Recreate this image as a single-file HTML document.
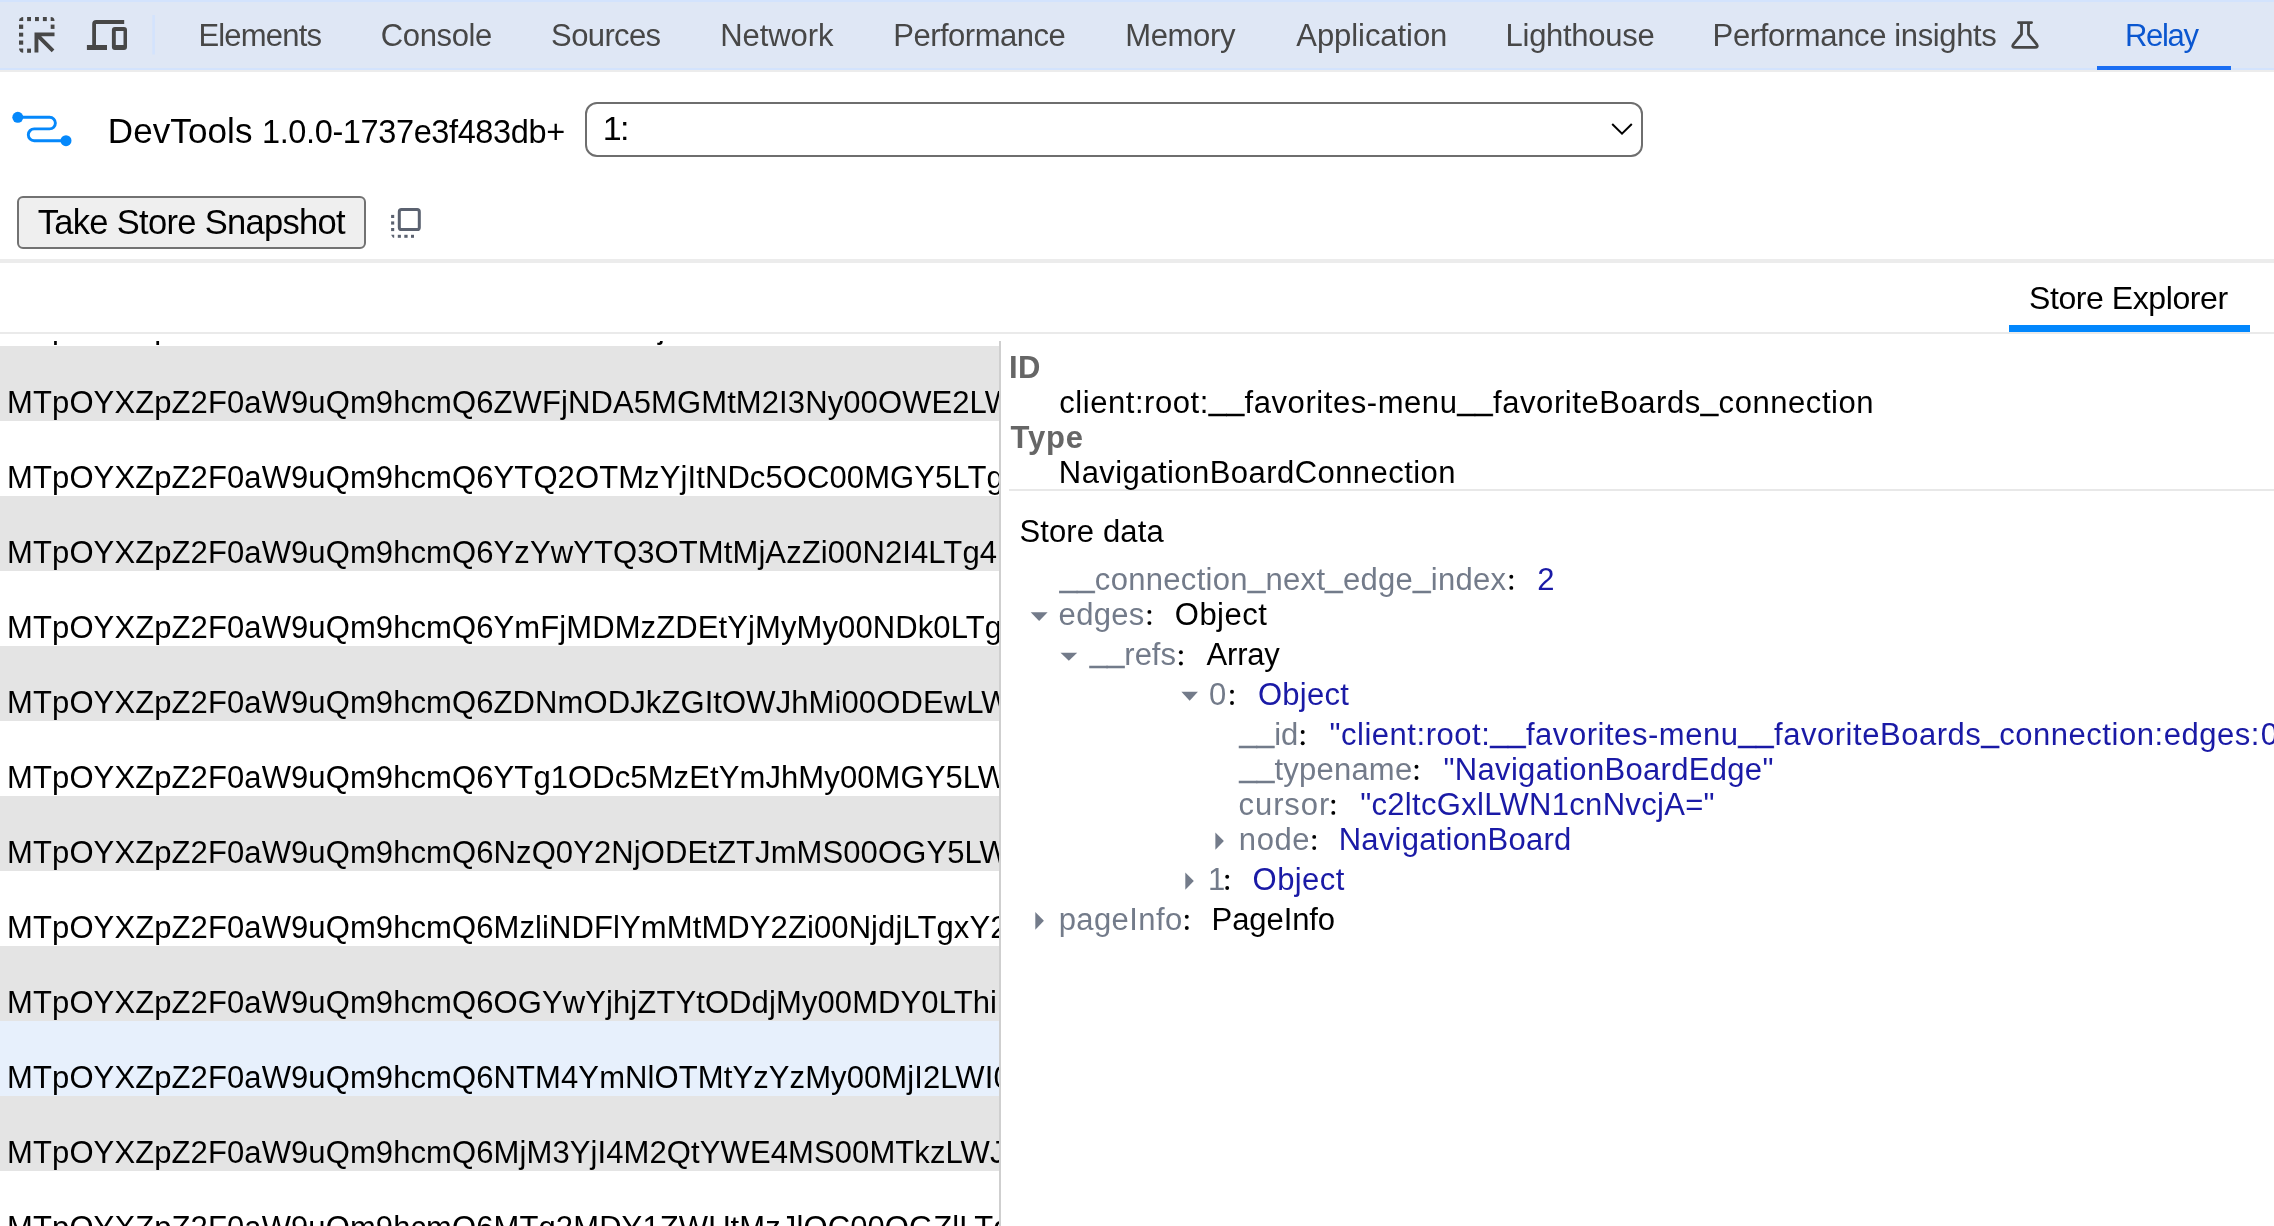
<!DOCTYPE html>
<html><head><meta charset="utf-8"><style>
*{margin:0;padding:0;box-sizing:border-box}
html,body{width:2274px;height:1226px;overflow:hidden;background:#fff}
body{position:relative;font-family:"Liberation Sans",sans-serif}
.t{position:absolute;white-space:pre;font-family:"Liberation Sans",sans-serif}
.layer{will-change:transform}
.us{position:relative;top:-2.6px;-webkit-text-stroke:0.55px currentColor}
.abs{position:absolute}
.row{position:absolute;left:0;width:999px;height:75px}
</style></head><body>

<div class="abs" style="left:0;top:0;width:2274px;height:2px;background:#d3e3fd"></div>
<div class="abs" style="left:0;top:2px;width:2274px;height:66px;background:#dfe7f5"></div>
<div class="abs" style="left:0;top:68px;width:2274px;height:2px;background:#d3e3fd"></div>
<div class="abs" style="left:0;top:70px;width:2274px;height:2px;background:#ececec"></div>
<svg class="abs" style="left:0;top:0" width="160" height="70" viewBox="0 0 160 70">
 <g fill="#474747">
  <path d="M19,21.1 A4.2,4.1 0 0 1 23.2,17 L23.2,21.1 Z"/>
  <rect x="27.1" y="17" width="3.9" height="4.1"/>
  <rect x="35" y="17" width="3.9" height="4.1"/>
  <rect x="42.9" y="17" width="3.9" height="4.1"/>
  <path d="M50.7,17 A3.8,4.1 0 0 1 54.5,21.1 L50.7,21.1 Z"/>
  <rect x="19" y="24.6" width="4.2" height="4.3"/>
  <rect x="19" y="32.7" width="4.2" height="3.9"/>
  <rect x="19" y="40.5" width="4.2" height="4.2"/>
  <path d="M19,48.6 L23.2,48.6 L23.2,52.8 A4.2,4.2 0 0 1 19,48.6 Z"/>
  <rect x="50.7" y="24.6" width="3.8" height="4.3"/>
  <rect x="27.1" y="48.6" width="3.9" height="4.2"/>
  <path d="M34.5,32.4 L54.5,32.4 L54.5,36.2 L41.2,36.2 L54.4,49.6 L51.7,52.3 L38.4,39 L38.4,52.4 L34.5,52.4 Z"/>
 </g>
 <g fill="#474747">
  <path d="M92.2,45 L92.2,24 Q92.2,20 96.2,20 L124.2,20 L124.2,23.9 L96,23.9 L96,45 L107,45 L107,50 L86.9,50 L86.9,45 Z"/>
  <path fill-rule="evenodd" d="M114.9,27.1 L124,27.1 Q127,27.1 127,30.1 L127,47 Q127,50 124,50 L114.9,50 Q111.9,50 111.9,47 L111.9,30.1 Q111.9,27.1 114.9,27.1 Z M115.8,31 L115.8,45 L123.5,45 L123.5,31 Z"/>
 </g>
 <rect x="152.3" y="15" width="2.6" height="39.5" fill="#d3e3fd"/>
</svg>
<svg class="abs" style="left:2000px;top:12px" width="50" height="46" viewBox="2000 12 50 46">
 <g fill="none" stroke="#474747" stroke-width="2.8" stroke-linejoin="round">
  <path d="M2018.5,22.6 H2031.6" stroke-linecap="round"/>
  <path d="M2021.5,23.5 V34.3 L2013.3,44.3 Q2011.6,47.4 2015,47.4 H2035 Q2038.4,47.4 2036.7,44.3 L2028.5,34.3 V23.5"/>
 </g>
</svg>
<div class="abs" style="left:2097px;top:66px;width:134px;height:4px;background:#1b6ef3"></div>


<svg class="abs" style="left:0;top:90px" width="90" height="70" viewBox="0 90 90 70">
 <g fill="#0588fb">
  <circle cx="17.8" cy="117.3" r="5.5"/>
  <circle cx="66" cy="140.7" r="5.5"/>
 </g>
 <path d="M18,117.3 H49.6 A5.8,5.8 0 0 1 49.6,128.9 H34.2 A5.9,5.9 0 0 0 34.2,140.7 H66" fill="none" stroke="#0588fb" stroke-width="2.9"/>
</svg>
<div class="abs" style="left:585.3px;top:102px;width:1057.7px;height:54.7px;border:2px solid #6e6e6e;border-radius:12px;background:#fff"></div>
<svg class="abs" style="left:1600px;top:115px" width="40" height="30" viewBox="1600 115 40 30">
 <path d="M1612.2,124 L1622,133.7 L1631.8,124" fill="none" stroke="#000" stroke-width="2"/>
</svg>
<div class="abs" style="left:17px;top:196px;width:348.8px;height:52.6px;border:2px solid #727272;border-radius:6px;background:#efefef"></div>
<svg class="abs" style="left:380px;top:200px" width="50" height="45" viewBox="380 200 50 45">
 <rect x="399.3" y="209.5" width="20" height="20.1" rx="2.2" fill="none" stroke="#5b6270" stroke-width="3"/>
 <g fill="#5b6270">
  <rect x="391.1" y="214.9" width="3.1" height="3.1"/>
  <rect x="391.1" y="221.4" width="3.1" height="3.2"/>
  <rect x="391.1" y="228" width="3.1" height="3.1"/>
  <path d="M391.1,234.8 L394.2,234.8 L394.2,237.8 L393,237.8 Z"/>
  <rect x="397.8" y="234.8" width="3.1" height="3"/>
  <rect x="404.3" y="234.8" width="3.3" height="3"/>
  <rect x="411" y="234.8" width="3" height="3"/>
 </g>
</svg>
<div class="abs" style="left:0;top:259px;width:2274px;height:4px;background:#ececec"></div>
<div class="abs" style="left:2009px;top:325px;width:241px;height:7px;background:#0287fd"></div>
<div class="abs" style="left:0;top:332px;width:2274px;height:2px;background:#eaeaea"></div>

<div class="abs layer" style="left:0;top:341px;width:999px;height:885px;overflow:hidden">
<div class="row" style="top:-70px;background:#fff"></div><div class="t" style="left:7.10px;top:-29px;font-size:31px;line-height:31px;letter-spacing:0.100px;color:#000">MTpOYXZpZ2F0aW9uOm9hcmO6ZDA5MGMtjI3NU00OWE2LWFkNmOtZTM1</div><div class="row" style="top:5px;background:#e4e4e4"></div><div class="t" style="left:7.10px;top:46px;font-size:31px;line-height:31px;letter-spacing:0.100px;color:#000">MTpOYXZpZ2F0aW9uQm9hcmQ6ZWFjNDA5MGMtM2I3Ny00OWE2LWFkNmQtZTg1</div><div class="row" style="top:80px;background:#fff"></div><div class="t" style="left:7.10px;top:121px;font-size:31px;line-height:31px;letter-spacing:0.100px;color:#000">MTpOYXZpZ2F0aW9uQm9hcmQ6YTQ2OTMzYjItNDc5OC00MGY5LTg3NzQtNzEy</div><div class="row" style="top:155px;background:#e4e4e4"></div><div class="t" style="left:7.10px;top:196px;font-size:31px;line-height:31px;letter-spacing:0.100px;color:#000">MTpOYXZpZ2F0aW9uQm9hcmQ6YzYwYTQ3OTMtMjAzZi00N2I4LTg4NDUtMGM3</div><div class="row" style="top:230px;background:#fff"></div><div class="t" style="left:7.10px;top:271px;font-size:31px;line-height:31px;letter-spacing:0.100px;color:#000">MTpOYXZpZ2F0aW9uQm9hcmQ6YmFjMDMzZDEtYjMyMy00NDk0LTg5ZTItNWYx</div><div class="row" style="top:305px;background:#e4e4e4"></div><div class="t" style="left:7.10px;top:346px;font-size:31px;line-height:31px;letter-spacing:0.100px;color:#000">MTpOYXZpZ2F0aW9uQm9hcmQ6ZDNmODJkZGItOWJhMi00ODEwLWE4NjItYjQz</div><div class="row" style="top:380px;background:#fff"></div><div class="t" style="left:7.10px;top:421px;font-size:31px;line-height:31px;letter-spacing:0.100px;color:#000">MTpOYXZpZ2F0aW9uQm9hcmQ6YTg1ODc5MzEtYmJhMy00MGY5LWIyNTQtOWE0</div><div class="row" style="top:455px;background:#e4e4e4"></div><div class="t" style="left:7.10px;top:496px;font-size:31px;line-height:31px;letter-spacing:0.100px;color:#000">MTpOYXZpZ2F0aW9uQm9hcmQ6NzQ0Y2NjODEtZTJmMS00OGY5LWFjNzUtNDFk</div><div class="row" style="top:530px;background:#fff"></div><div class="t" style="left:7.10px;top:571px;font-size:31px;line-height:31px;letter-spacing:0.100px;color:#000">MTpOYXZpZ2F0aW9uQm9hcmQ6MzliNDFlYmMtMDY2Zi00NjdjLTgxY2ItYzE3</div><div class="row" style="top:605px;background:#e4e4e4"></div><div class="t" style="left:7.10px;top:646px;font-size:31px;line-height:31px;letter-spacing:0.100px;color:#000">MTpOYXZpZ2F0aW9uQm9hcmQ6OGYwYjhjZTYtODdjMy00MDY0LThiNWEtNjk3</div><div class="row" style="top:680px;background:#e7f0fc"></div><div class="t" style="left:7.10px;top:721px;font-size:31px;line-height:31px;letter-spacing:0.100px;color:#000">MTpOYXZpZ2F0aW9uQm9hcmQ6NTM4YmNlOTMtYzYzMy00MjI2LWI0ZGQtNzU4</div><div class="row" style="top:755px;background:#e4e4e4"></div><div class="t" style="left:7.10px;top:796px;font-size:31px;line-height:31px;letter-spacing:0.100px;color:#000">MTpOYXZpZ2F0aW9uQm9hcmQ6MjM3YjI4M2QtYWE4MS00MTkzLWJkYzItMzkw</div><div class="row" style="top:830px;background:#fff"></div><div class="t" style="left:7.10px;top:871px;font-size:31px;line-height:31px;letter-spacing:0.100px;color:#000">MTpOYXZpZ2F0aW9uQm9hcmQ6MTg2MDY1ZWUtMzJlOC00OGZlLTg4NjctNGQy</div>
</div>

<div class="abs" style="left:999px;top:341px;width:2px;height:885px;background:#cfcfcf"></div>
<div class="abs" style="left:1009px;top:489.3px;width:1265px;height:1.6px;background:#e8e8e8"></div>
<svg class="abs" style="left:1000px;top:600px" width="260" height="340" viewBox="1000 600 260 340">
 <g fill="#737b8a">
  <path d="M1030.7,612.3 H1047.6 L1039.15,621.1 Z"/>
  <path d="M1060.5,652.7 H1077.2 L1068.85,660.8 Z"/>
  <path d="M1181.4,691.7 H1197.9 L1189.65,700.8 Z"/>
  <path d="M1215.4,832.4 V849.7 L1223.9,841 Z"/>
  <path d="M1185.3,872.5 V889.8 L1193.8,881.1 Z"/>
  <path d="M1035.3,911.9 V929.7 L1043.9,920.8 Z"/>
 </g>
</svg>

<svg class="abs" style="left:1100px;top:560px" width="450" height="380" viewBox="1100 560 450 380"><g fill="#000"><circle cx="1511.3" cy="587.9" r="1.95"/><circle cx="1511.3" cy="576.7" r="1.95"/><circle cx="1149.4" cy="623.1" r="1.95"/><circle cx="1149.4" cy="611.9" r="1.95"/><circle cx="1180.9" cy="663.5" r="1.95"/><circle cx="1180.9" cy="652.3" r="1.95"/><circle cx="1232.0" cy="703.0" r="1.95"/><circle cx="1232.0" cy="691.8" r="1.95"/><circle cx="1302.7" cy="743.2" r="1.95"/><circle cx="1302.7" cy="732.0" r="1.95"/><circle cx="1416.5" cy="778.0" r="1.95"/><circle cx="1416.5" cy="766.8" r="1.95"/><circle cx="1333.3" cy="812.9" r="1.95"/><circle cx="1333.3" cy="801.7" r="1.95"/><circle cx="1314.2" cy="848.1" r="1.95"/><circle cx="1314.2" cy="836.9" r="1.95"/><circle cx="1227.2" cy="888.0" r="1.95"/><circle cx="1227.2" cy="876.8" r="1.95"/><circle cx="1186.8" cy="928.0" r="1.95"/><circle cx="1186.8" cy="916.8" r="1.95"/></g></svg>
<svg class="abs" style="left:0;top:1216px" width="10" height="10" viewBox="0 1216 10 1226"><path d="M0,1220.5 L5.5,1226 L0,1226 Z" fill="#c9c9c9"/></svg>
<div class="abs layer" style="left:0;top:0;width:2274px;height:1226px;overflow:hidden">
<div class="t" style="left:198.40px;top:20.00px;font-size:31px;line-height:31px;letter-spacing:-0.800px;color:#474747;font-weight:400">Elements</div><div class="t" style="left:380.80px;top:20.00px;font-size:31px;line-height:31px;letter-spacing:-0.367px;color:#474747;font-weight:400">Console</div><div class="t" style="left:551.10px;top:20.00px;font-size:31px;line-height:31px;letter-spacing:-0.617px;color:#474747;font-weight:400">Sources</div><div class="t" style="left:720.20px;top:20.00px;font-size:31px;line-height:31px;letter-spacing:-0.083px;color:#474747;font-weight:400">Network</div><div class="t" style="left:893.30px;top:20.00px;font-size:31px;line-height:31px;letter-spacing:-0.510px;color:#474747;font-weight:400">Performance</div><div class="t" style="left:1125.20px;top:20.00px;font-size:31px;line-height:31px;letter-spacing:-0.320px;color:#474747;font-weight:400">Memory</div><div class="t" style="left:1296.30px;top:20.00px;font-size:31px;line-height:31px;letter-spacing:-0.060px;color:#474747;font-weight:400">Application</div><div class="t" style="left:1505.60px;top:20.00px;font-size:31px;line-height:31px;letter-spacing:-0.289px;color:#474747;font-weight:400">Lighthouse</div><div class="t" style="left:1712.60px;top:20.00px;font-size:31px;line-height:31px;letter-spacing:-0.368px;color:#474747;font-weight:400">Performance insights</div><div class="t" style="left:2125.00px;top:20.00px;font-size:31px;line-height:31px;letter-spacing:-1.325px;color:#0b57d0;font-weight:400">Relay</div><div class="t" style="left:107.80px;top:113.00px;font-size:35px;line-height:35px;letter-spacing:0.100px;color:#000;font-weight:400">DevTools</div><div class="t" style="left:262.00px;top:116.00px;font-size:32.5px;line-height:32.5px;letter-spacing:-0.378px;color:#000;font-weight:400">1.0.0-1737e3f483db+</div><div class="t" style="left:602.80px;top:111.00px;font-size:34px;line-height:34px;letter-spacing:-1.800px;color:#000;font-weight:400">1:</div><div class="t" style="left:37.70px;top:205.00px;font-size:34.5px;line-height:34.5px;letter-spacing:-0.683px;color:#000;font-weight:400">Take Store Snapshot</div><div class="t" style="left:2029.00px;top:282.00px;font-size:32px;line-height:32px;letter-spacing:-0.423px;color:#000;font-weight:400">Store Explorer</div><div class="t" style="left:1008.90px;top:352.00px;font-size:31px;line-height:31px;letter-spacing:0.600px;color:#666;font-weight:700">ID</div><div class="t" style="left:1059.20px;top:387.00px;font-size:31px;line-height:31px;letter-spacing:0.561px;color:#000;font-weight:400">client:root:<span class="us">__</span>favorites-menu<span class="us">__</span>favoriteBoards<span class="us">_</span>connection</div><div class="t" style="left:1010.60px;top:422.00px;font-size:31px;line-height:31px;letter-spacing:0.767px;color:#666;font-weight:700">Type</div><div class="t" style="left:1058.80px;top:457.00px;font-size:31px;line-height:31px;letter-spacing:0.442px;color:#000;font-weight:400">NavigationBoardConnection</div><div class="t" style="left:1019.40px;top:516.00px;font-size:31px;line-height:31px;letter-spacing:0.133px;color:#000;font-weight:400">Store data</div><div class="t" style="left:1059.70px;top:564.00px;font-size:31px;line-height:31px;letter-spacing:0.315px;color:#737b8a;font-weight:400"><span class="us">__</span>connection<span class="us">_</span>next<span class="us">_</span>edge<span class="us">_</span>index</div><div class="t" style="left:1537.20px;top:564.00px;font-size:31px;line-height:31px;letter-spacing:0.294px;color:#1a1aa6;font-weight:400">2</div><div class="t" style="left:1058.60px;top:599.00px;font-size:31px;line-height:31px;letter-spacing:0.300px;color:#737b8a;font-weight:400">edges</div><div class="t" style="left:1174.80px;top:599.00px;font-size:31px;line-height:31px;letter-spacing:0.480px;color:#000;font-weight:400">Object</div><div class="t" style="left:1089.90px;top:639.00px;font-size:31px;line-height:31px;letter-spacing:-0.020px;color:#737b8a;font-weight:400"><span class="us">__</span>refs</div><div class="t" style="left:1206.60px;top:639.00px;font-size:31px;line-height:31px;letter-spacing:-0.200px;color:#000;font-weight:400">Array</div><div class="t" style="left:1209.00px;top:679.00px;font-size:31px;line-height:31px;letter-spacing:0.294px;color:#737b8a;font-weight:400">0</div><div class="t" style="left:1258.00px;top:679.00px;font-size:31px;line-height:31px;letter-spacing:0.240px;color:#1a1aa6;font-weight:400">Object</div><div class="t" style="left:1239.60px;top:719.00px;font-size:31px;line-height:31px;letter-spacing:0.033px;color:#737b8a;font-weight:400"><span class="us">__</span>id</div><div class="t" style="left:1329.40px;top:719.00px;font-size:31px;line-height:31px;letter-spacing:0.535px;color:#1a1aa6;font-weight:400">&quot;client:root:<span class="us">__</span>favorites-menu<span class="us">__</span>favoriteBoards<span class="us">_</span>connection:edges:</div><div class="t" style="left:2260.80px;top:719.00px;font-size:31px;line-height:31px;letter-spacing:0.294px;color:#1a1aa6;font-weight:400">0&quot;</div><div class="t" style="left:1239.60px;top:754.00px;font-size:31px;line-height:31px;letter-spacing:0.211px;color:#737b8a;font-weight:400"><span class="us">__</span>typename</div><div class="t" style="left:1443.50px;top:754.00px;font-size:31px;line-height:31px;letter-spacing:0.315px;color:#1a1aa6;font-weight:400">&quot;NavigationBoardEdge&quot;</div><div class="t" style="left:1238.60px;top:789.00px;font-size:31px;line-height:31px;letter-spacing:0.900px;color:#737b8a;font-weight:400">cursor</div><div class="t" style="left:1360.20px;top:789.00px;font-size:31px;line-height:31px;letter-spacing:0.310px;color:#1a1aa6;font-weight:400">&quot;c2ltcGxlLWN1cnNvcjA=&quot;</div><div class="t" style="left:1238.80px;top:824.00px;font-size:31px;line-height:31px;letter-spacing:0.600px;color:#737b8a;font-weight:400">node</div><div class="t" style="left:1338.70px;top:824.00px;font-size:31px;line-height:31px;letter-spacing:0.243px;color:#1a1aa6;font-weight:400">NavigationBoard</div><div class="t" style="left:1208.10px;top:864.00px;font-size:31px;line-height:31px;letter-spacing:0.294px;color:#737b8a;font-weight:400">1</div><div class="t" style="left:1252.60px;top:864.00px;font-size:31px;line-height:31px;letter-spacing:0.420px;color:#1a1aa6;font-weight:400">Object</div><div class="t" style="left:1058.70px;top:904.00px;font-size:31px;line-height:31px;letter-spacing:0.400px;color:#737b8a;font-weight:400">pageInfo</div><div class="t" style="left:1211.60px;top:904.00px;font-size:31px;line-height:31px;letter-spacing:-0.086px;color:#000;font-weight:400">PageInfo</div>
</div>
</body></html>
